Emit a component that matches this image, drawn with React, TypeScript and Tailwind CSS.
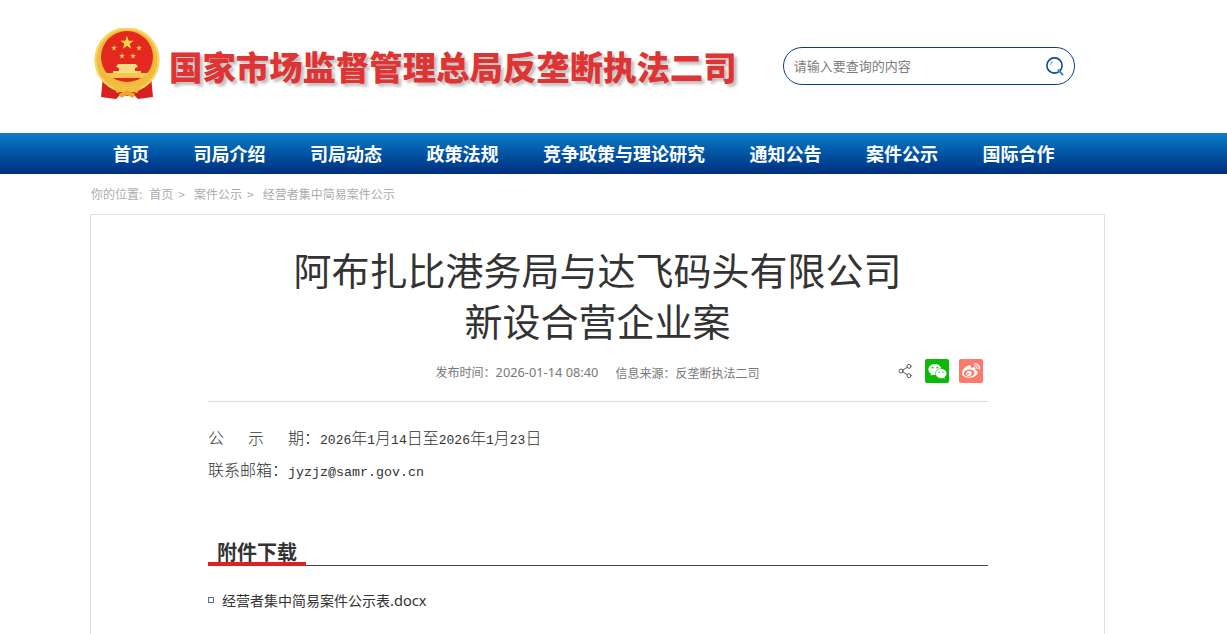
import { FaWeibo, FaWeixin } from 'react-icons/fa';
import { Share2 } from 'lucide-react';

const navItems = ['首页', '司局介绍', '司局动态', '政策法规', '竞争政策与理论研究', '通知公告', '案件公示', '国际合作'];

function Star({ x, y, r }: { x: number; y: number; r: number }) {
  const pts = Array.from({ length: 10 }, (_, i) => {
    const a = -Math.PI / 2 + (i * Math.PI) / 5;
    const d = i % 2 === 0 ? r : r * 0.4;
    return `${x + d * Math.cos(a)},${y + d * Math.sin(a)}`;
  }).join(' ');
  return <polygon points={pts} fill="#f9d648" />;
}

function Emblem() {
  return (
    <svg width="68" height="72" viewBox="0 0 68 72" className="shrink-0">
      {/* ribbons */}
      <path d="M11 48 L9 69 L24 71 L29 66 L35 68 L41 66 L46 71 L61 69 L59 48 L35 60Z" fill="#d8201f" />
      {/* gold ring */}
      <circle cx="35" cy="32" r="32.5" fill="#f2bb3c" />
      <circle cx="35" cy="32" r="31.5" fill="none" stroke="#f9d766" strokeWidth="2" />
      <circle cx="35" cy="29" r="26" fill="#e3291f" />
      <Star x={35} y={15} r={7} />
      <Star x={22} y={20} r={3} />
      <Star x={47} y={20} r={3} />
      <Star x={30} y={28} r={3} />
      <Star x={41} y={28} r={3} />
      {/* gate */}
      <path d="M24 39 L26 36 H44 L46 39 L43 40 V43 H49 V46 H21 V43 H27 V40Z" fill="#f8dc82" />
      <path d="M13 45 H57 L54 50 H16Z" fill="#f6c94a" />
      <path d="M13 50 Q35 67 57 50 L54 47 Q35 61 16 47Z" fill="#f2bb3c" />
      {/* knot */}
      <path d="M22 60 Q29 55 35 59 Q41 55 48 60 L45 65 L35 62 L25 65Z" fill="#f2c040" />
      <path d="M27 66 L35 62 L43 66 L41 70 L35 67 L29 70Z" fill="#e8a62c" />
    </svg>
  );
}

function SearchIcon() {
  return (
    <svg width="20" height="20" viewBox="0 0 20 20" fill="none" className="shrink-0">
      <circle cx="9.5" cy="9.5" r="7.6" stroke="#0f4a8a" strokeWidth="1.6" />
      <path d="M5.5 9 A4 4 0 0 1 8 5.6" stroke="#7fa9cf" strokeWidth="1.2" />
      <path d="M13.5 14 L17.5 18.5" stroke="#3a8fc4" strokeWidth="2" strokeLinecap="round" />
    </svg>
  );
}

export default function App() {
  return (
    <div className="h-[634px] overflow-hidden bg-white font-['Noto_Sans_CJK_SC',sans-serif]">
      {/* Header */}
      <header className="flex h-[133px] items-start pl-[92px] pt-[28px]">
        <Emblem />
        <h1 className="ml-[9px] mt-[16px] whitespace-nowrap text-[33.4px] font-black leading-[44px] text-[#df3434] [text-shadow:3px_3px_3px_rgba(0,0,0,0.25)]">
          国家市场监督管理总局反垄断执法二司
        </h1>
        <div className="ml-[46px] mt-[19px] flex h-[38px] w-[292px] items-center justify-between rounded-full border border-[#0b3f8a] pl-[10px] pr-[9px]">
          <span className="text-[13px] text-[#7d7d7d]">请输入要查询的内容</span>
          <SearchIcon />
        </div>
      </header>

      {/* Nav */}
      <nav className="flex h-[41px] items-center gap-[44.5px] bg-gradient-to-b from-[#0f7cca] to-[#012e7e] pb-[2px] pl-[113px]">
        {navItems.map((item) => (
          <span key={item} className="text-[18px] font-bold leading-none text-white">
            {item}
          </span>
        ))}
      </nav>

      {/* Breadcrumb */}
      <div className="flex h-[40px] items-center pl-[91px] text-[12px] text-[#a9adb2]">
        <span>你的位置:</span>
        <span className="ml-[7px]">首页</span>
        <span className="ml-[5px]">&gt;</span>
        <span className="ml-[9px]">案件公示</span>
        <span className="ml-[5px]">&gt;</span>
        <span className="ml-[9px]">经营者集中简易案件公示</span>
      </div>

      {/* Card */}
      <main className="ml-[90px] h-[600px] w-[1015px] border border-[#d5e0ea] pl-[117px] pr-[116px] pt-[28px]">
        <h2 className="-ml-[1px] text-center text-[38px] font-normal leading-[51px] text-[#333]">
          阿布扎比港务局与达飞码头有限公司
          <br />
          新设合营企业案
        </h2>

        <div className="relative mt-[14px] flex h-[43px] items-center justify-center border-b border-[#d8dde3] pb-[15px] pr-[1px] text-[12px] text-[#777]">
          <span>
            发布时间：<span className="font-['Noto_Sans',sans-serif] text-[12.8px]">2026-01-14 08:40</span>
          </span>
          <span className="ml-[17px]">信息来源：反垄断执法二司</span>
          <div className="absolute right-[5px] top-0 flex items-center">
            <Share2 size={16} strokeWidth={1.3} className="text-[#444]" />
            <span className="ml-[12px] flex h-[24px] w-[24px] items-center justify-center rounded-[2px] bg-[#09bb07]">
              <FaWeixin size={19} color="#fff" />
            </span>
            <span className="ml-[10px] flex h-[24px] w-[24px] items-center justify-center rounded-[2px] bg-[#fb7a6b]">
              <FaWeibo size={18} color="#fff" />
            </span>
          </div>
        </div>

        {/* Notice */}
        <div className="pt-[19px] text-[16px] font-light leading-[32px] text-[#333]">
          <p className="flex h-[32px] items-baseline">
            <span>公</span>
            <span className="ml-[24px]">示</span>
            <span className="ml-[24px]">期：</span>
            <span className="font-['Liberation_Mono',monospace] text-[13px] font-normal">2026</span>年
            <span className="font-['Liberation_Mono',monospace] text-[13px] font-normal">1</span>月
            <span className="font-['Liberation_Mono',monospace] text-[13px] font-normal">14</span>日至
            <span className="font-['Liberation_Mono',monospace] text-[13px] font-normal">2026</span>年
            <span className="font-['Liberation_Mono',monospace] text-[13px] font-normal">1</span>月
            <span className="font-['Liberation_Mono',monospace] text-[13px] font-normal">23</span>日
          </p>
          <p className="flex h-[32px] items-baseline">
            联系邮箱：
            <span className="font-['Liberation_Mono',monospace] text-[13.33px] font-normal">jyzjz@samr.gov.cn</span>
          </p>
        </div>

        {/* Attachments */}
        <div className="mt-[49px] flex h-[32px] items-end border-b border-[#444]">
          <div className="mb-[-1px] h-[32px] w-[98px] border-b-4 border-[#e01f1f] pl-[9px] text-[20px] font-bold leading-[36px] text-[#333]">
            附件下载
          </div>
        </div>
        <div className="mt-[21px] flex items-center text-[14px] leading-[26px] text-[#333]">
          <span className="h-[6px] w-[6px] border border-[#5a6d9a]" />
          <span className="ml-[8px]">
            经营者集中简易案件公示表<span className="font-['Noto_Sans',sans-serif] text-[14.6px]">.docx</span>
          </span>
        </div>
      </main>
    </div>
  );
}
